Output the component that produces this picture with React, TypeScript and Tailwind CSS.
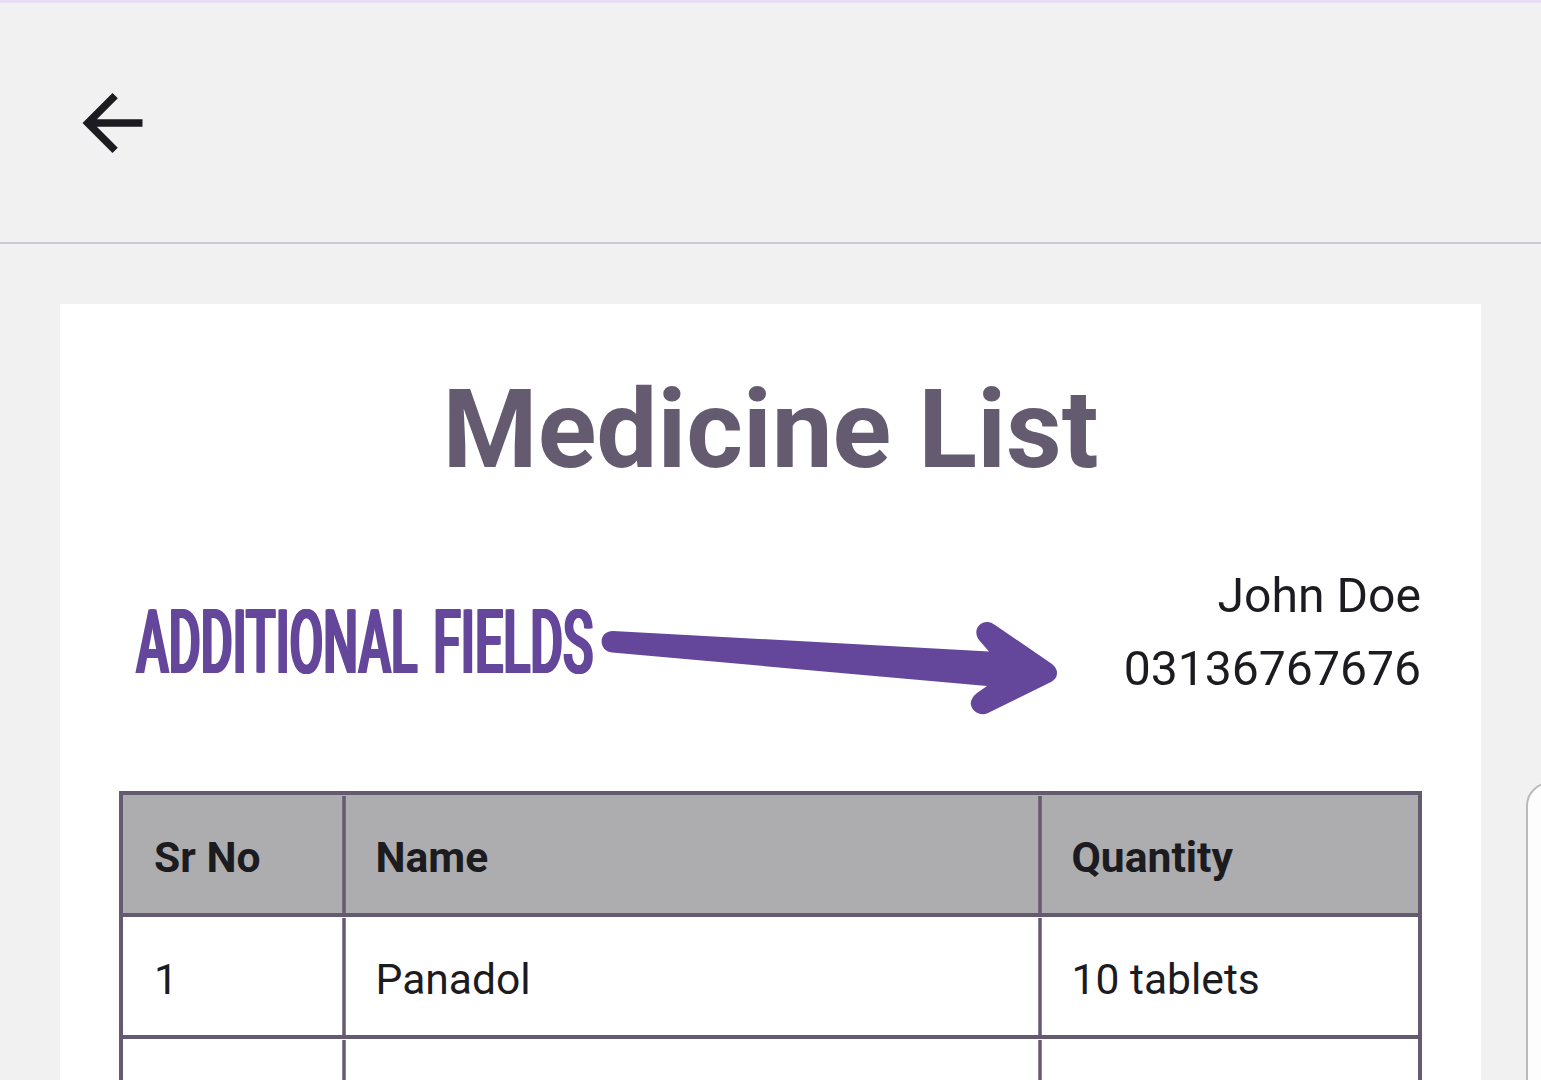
import React from "react";

function VLine() {
  return <div className="mt-px w-1 shrink-0 border-x border-[#655b70]/75 bg-[#655b70] bg-clip-padding" />;
}

function Row({ cells, bold }: { cells: string[]; bold?: boolean }) {
  return (
    <div className={bold ? "bg-[#adadaf] font-bold" : "bg-white"}>
      <div className="flex h-[118px]">
        <div className="flex w-[219px] items-center pt-[8px] pl-[31px]">{cells[0]}</div>
        <VLine />
        <div className="flex w-[692px] items-center pt-[8px] pl-[29.5px]">{cells[1]}</div>
        <VLine />
        <div className="flex flex-1 items-center pt-[8px] pl-[29.5px]">{cells[2]}</div>
      </div>
      <div className="h-1 border-y border-[#655b70]/80 bg-[#655b70]" />
    </div>
  );
}

const word =
  "absolute top-0 left-0 origin-left text-[88.4px] leading-[104px] font-medium whitespace-nowrap text-[#64469b] [text-shadow:1.5px_0_#64469b,3px_0_#64469b,4.5px_0_#64469b]";

export default function App() {
  return (
    <div className="relative flex h-[1080px] w-[1541px] flex-col overflow-hidden bg-[#f1f1f1] font-['Roboto',sans-serif] text-[#1c1b1f]">
      <header className="flex h-[244px] shrink-0 items-center border-t-[3px] border-b-2 border-t-[#e7def5] border-b-[#cacad2] pl-[82px]">
        <svg width="61" height="60" viewBox="4 4 16 16" className="fill-[#1c1b1f]">
          <path d="M20 11H7.83l5.59-5.59L12 4l-8 8 8 8 1.41-1.41L7.83 13H20v-2z" />
        </svg>
      </header>
      <main className="mx-[60px] mt-[60px] flex h-[776px] flex-col bg-white px-[59px]">
        <h1 className="mt-[63px] text-center text-[108.7px] leading-[126px] font-bold text-[#655b70]">Medicine List</h1>
        <section className="mt-[66px] flex h-[144px] justify-between">
          <div className="flex">
            <div className="mt-[31.5px] ml-[15.5px] flex h-[104px] w-[457.5px] gap-[14px]">
              <div className="relative w-[283px]">
                <span className={`${word} scale-x-[0.554]`}>ADDITIONAL</span>
              </div>
              <div className="relative w-[160px]">
                <span className={`${word} scale-x-[0.566]`}>FIELDS</span>
              </div>
            </div>
            <svg width="456" height="94" viewBox="601 621 456 94" className="mt-[62px] ml-[9px] fill-[#64469b]">
              <path d="M613 631 L989 651.5 L979 640 C972 630 980 621 988 622 Q991 622 995 625 L1052 664 Q1057 668 1057 673 Q1057 679 1051 682 L988 713 C978 718 967 707 972 699 Q973 696 977 693 L987 686 L612 652.5 C598 651 598 631 613 631Z" />
            </svg>
          </div>
          <div className="mr-px text-right text-[48.1px] leading-[73px]">
            <p>John Doe</p>
            <p>03136767676</p>
          </div>
        </section>
        <div className="mt-[88px] border-x-4 border-t-4 border-[#655b70] text-[42.6px]">
          <Row cells={["Sr No", "Name", "Quantity"]} bold />
          <Row cells={["1", "Panadol", "10 tablets"]} />
          <Row cells={["", "", ""]} />
        </div>
      </main>
      <div className="absolute top-[782px] left-[1525.5px] h-[340px] w-[100px] rounded-[24px] border-2 border-[#bababa] bg-[#fdfdfd]" />
    </div>
  );
}
